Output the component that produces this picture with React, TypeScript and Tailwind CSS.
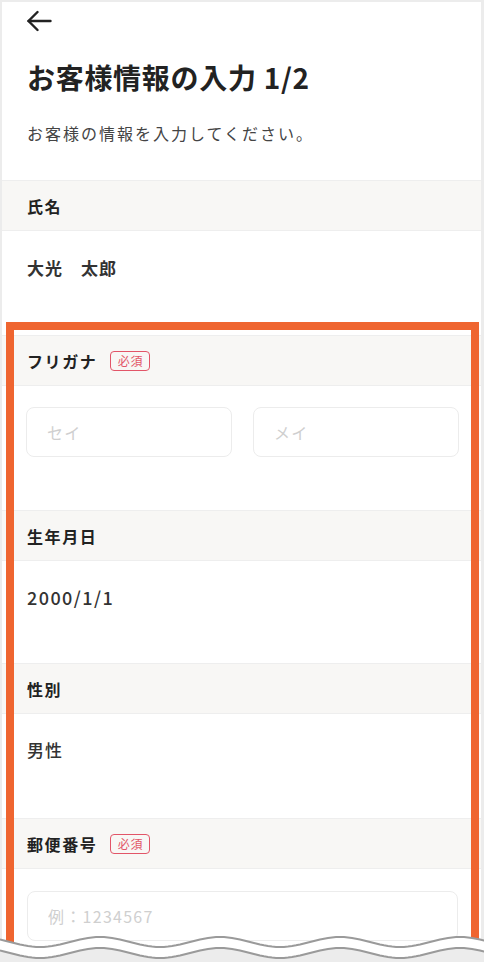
const font = '"Noto Sans CJK JP", "Noto Sans", sans-serif';

function wavePath(y0: number) {
  let d = "";
  for (let x = 0; x <= 488; x += 4) {
    const y = y0 - 5 * Math.cos((2 * Math.PI * (x - 100)) / 120);
    d += (x === 0 ? "M" : "L") + x + " " + y.toFixed(2) + " ";
  }
  return d;
}

function Required() {
  return (
    <span className="ml-[13px] inline-flex h-[20px] w-[40px] items-center justify-center rounded-[4px] border-[1.5px] border-[#e25568] text-[12px] leading-none tracking-[0.05em] text-[#e25568]">
      必須
    </span>
  );
}

function SectionHeader({ label, required }: { label: string; required?: boolean }) {
  return (
    <div className="flex h-[51px] items-center border-y border-[#eeeeee] bg-[#f8f7f5] pl-[25px]">
      <span className="text-[16px] font-bold tracking-[0.1em] text-[#222222]">{label}</span>
      {required && <Required />}
    </div>
  );
}

function TextInput({ placeholder }: { placeholder: string }) {
  return (
    <input
      type="text"
      placeholder={placeholder}
      className="h-[50px] w-full min-w-0 rounded-[8px] border border-[#ececec] bg-white px-[20px] text-[16px] tracking-[0.08em] text-[#333333] placeholder:text-[#cfcfcf] focus:outline-none"
    />
  );
}

export default function App() {
  const upper = wavePath(14);
  const lower = wavePath(25);

  return (
    <div className="relative h-[962px] w-[484px] overflow-hidden bg-[#ececec]" style={{ fontFamily: font }}>
      <div className="ml-[2px] mt-[2px] h-[960px] w-[479px] bg-white">
        {/* Top */}
        <div className="pb-[35px] pl-[25px] pt-[8px]">
          <svg width="25" height="22" viewBox="0 0 25 22" fill="none" stroke="#222" strokeWidth="2.4" strokeLinecap="round" strokeLinejoin="round">
            <path d="M23.5 11H1.5" />
            <path d="M10.5 2L1.5 11L10.5 20" />
          </svg>
          <h1 className="mt-[25px] text-[28px] font-bold leading-[40px] tracking-[0.025em] text-[#222222]">お客様情報の入力 1/2</h1>
          <p className="mt-[24px] text-[16px] leading-[24px] tracking-[0.125em] text-[#444444]">
            お客様の情報を入力してください。
          </p>
        </div>

        {/* 氏名 */}
        <SectionHeader label="氏名" />
        <div className="h-[104px] pl-[25px] pt-[24px]">
          <span className="text-[17px] font-bold leading-[26px] tracking-[0.06em] text-[#333333]">大光　太郎</span>
        </div>

        {/* フリガナ */}
        <SectionHeader label="フリガナ" required />
        <div className="flex h-[124px] gap-[21px] pl-[24px] pr-[22px] pt-[21px]">
          <TextInput placeholder="セイ" />
          <TextInput placeholder="メイ" />
        </div>

        {/* 生年月日 */}
        <SectionHeader label="生年月日" />
        <div className="h-[102px] pl-[25px] pt-[23px]">
          <span className="text-[18px] font-medium leading-[26px] tracking-[0.08em] text-[#333333]">2000/1/1</span>
        </div>

        {/* 性別 */}
        <SectionHeader label="性別" />
        <div className="h-[104px] pl-[25px] pt-[23px]">
          <span className="text-[17px] font-medium leading-[26px] tracking-[0.06em] text-[#333333]">男性</span>
        </div>

        {/* 郵便番号 */}
        <SectionHeader label="郵便番号" required />
        <div className="pl-[25px] pr-[23px] pt-[22px]">
          <TextInput placeholder="例：1234567" />
        </div>
      </div>

      {/* highlight */}
      <div className="absolute left-[6px] top-[322px] h-[660px] w-[473px] border-[8px] border-[#ef6530]" />

      {/* torn edge */}
      <svg className="absolute bottom-0 left-0" width="484" height="34" viewBox="0 0 484 34">
        <path d={upper + "L488 34 L0 34 Z"} fill="#ffffff" />
        <path d={lower + "L488 34 L0 34 Z"} fill="#ececec" />
        <path d={upper} fill="none" stroke="#9a9a9a" strokeWidth="2" />
        <path d={lower} fill="none" stroke="#9a9a9a" strokeWidth="2" />
      </svg>
    </div>
  );
}
